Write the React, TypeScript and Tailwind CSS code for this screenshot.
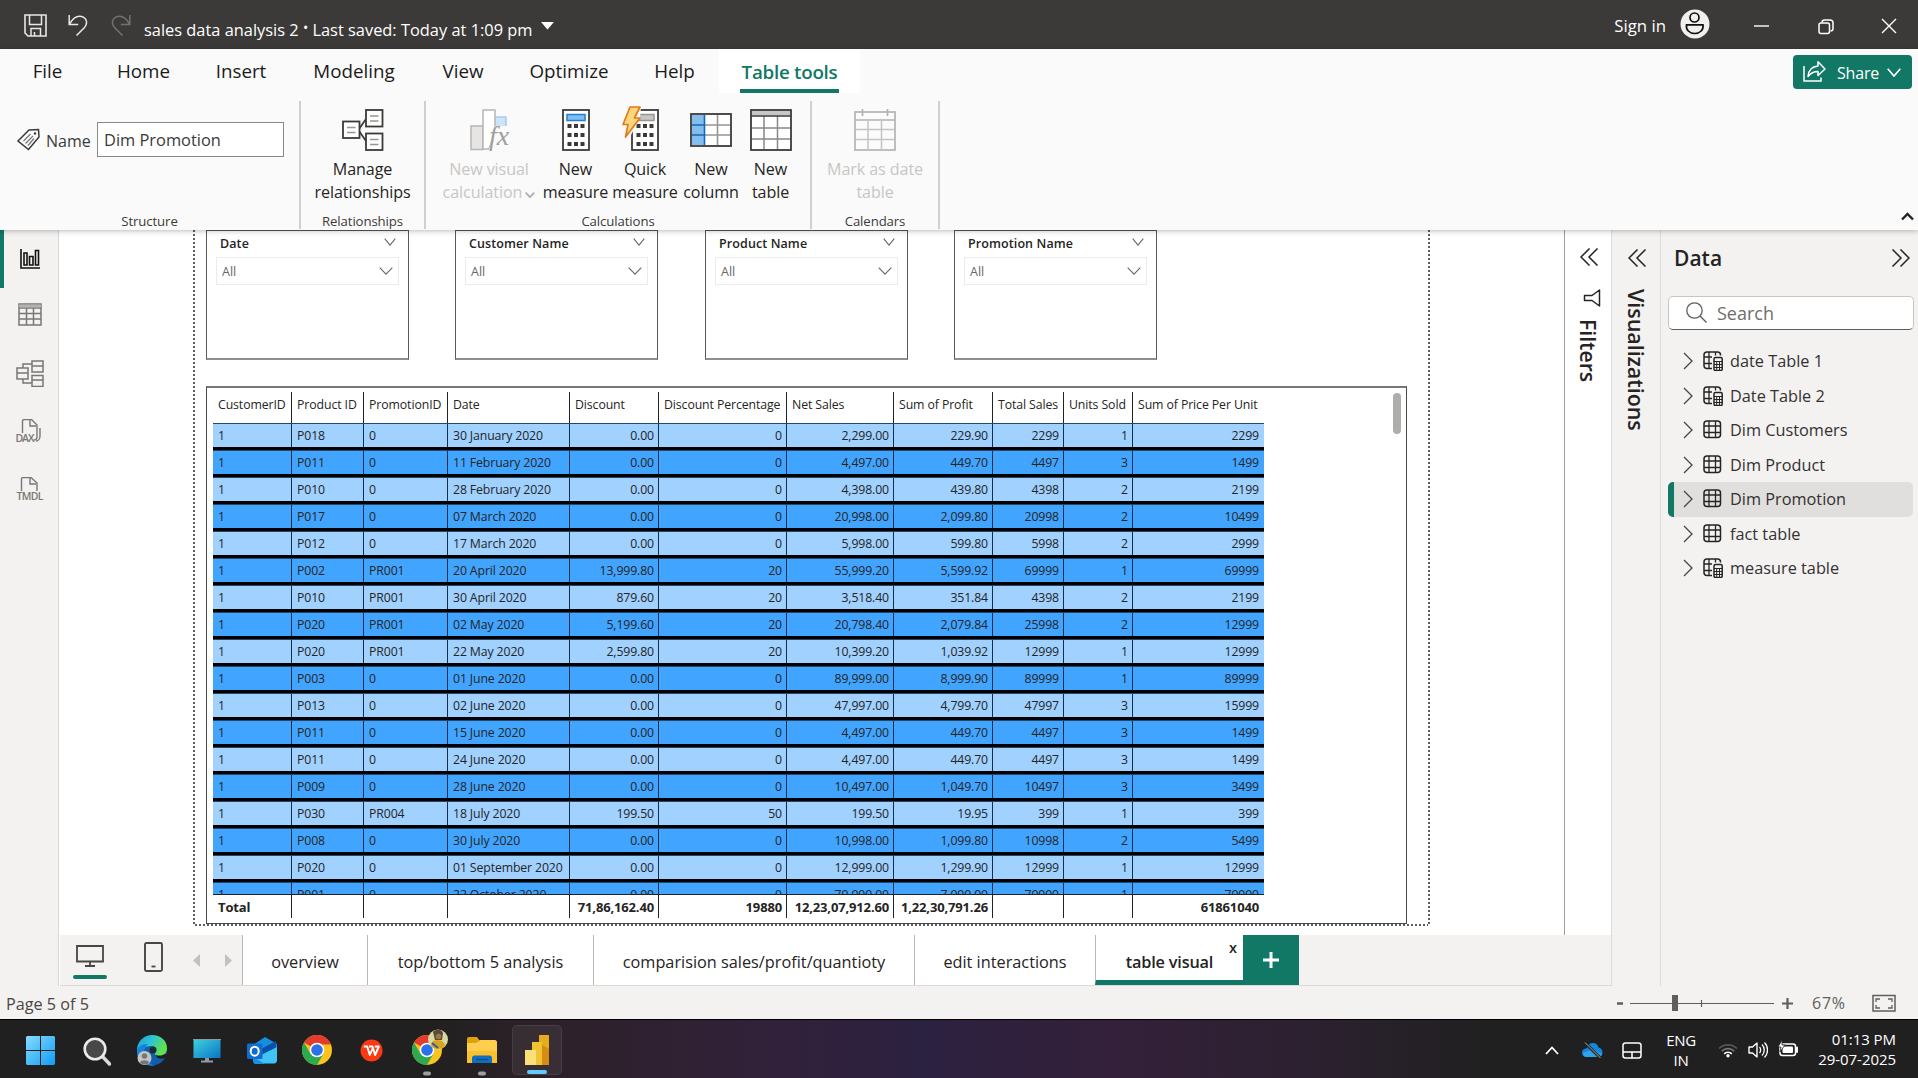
import React from "react";

type Svg = { children: React.ReactNode; w: number; h: number; vb?: string; className?: string };
const Ic = ({ children, w, h, vb, className }: Svg) => (
  <svg width={w} height={h} viewBox={vb ?? `0 0 ${w} ${h}`} fill="none" className={`shrink-0 ${className ?? ""}`}>
    {children}
  </svg>
);

const Chevron = ({ w, h, color, sw = 1.3, className }: { w: number; h: number; color: string; sw?: number; className?: string }) => (
  <Ic w={w} h={h} className={className}>
    <path d={`M.7 .7L${w / 2} ${h - 0.9}L${w - 0.7} .7`} stroke={color} strokeWidth={sw} />
  </Ic>
);

/* ---------- Title bar ---------- */
const TitleBar = () => (
  <header className="flex h-[49px] shrink-0 items-start bg-[#3b3a38] text-white">
    <Ic w={23} h={23} className="mt-[14px] ml-6">
      <path d="M1 1h21v21H4l-3-3z" stroke="#e8e8e8" strokeWidth="1.6" />
      <path d="M5.5 1v9.5h12V1M7 22v-7.5h9.500V22M10.500 18v4" stroke="#e8e8e8" strokeWidth="1.5" />
    </Ic>
    <Ic w={20} h={22} className="mt-[14px] ml-[21px]">
      <path d="M1.200 1v9.500h9M1.500 10C5 4 9.500 1.500 13.500 2.500C19 4 20 9.500 16.500 13.500L8.500 21.500" stroke="#e8e8e8" strokeWidth="1.5" />
    </Ic>
    <Ic w={20} h={22} className="mt-[14px] ml-[23px]">
      <path d="M18.800 1v9.500h-9M18.500 10C15 4 10.500 1.500 6.500 2.500C1 4 0 9.500 3.500 13.500L11.500 21.500" stroke="#73716f" strokeWidth="1.5" />
    </Ic>
    <div className="mt-[18px] ml-[13px] w-[390px] text-[16.4px] leading-6 whitespace-nowrap">
      sales data analysis 2 <span className="relative -top-[3px] text-[14px]">•</span> Last saved: Today at 1:09 pm
    </div>
    <Ic w={13} h={8} className="mt-[22px] ml-[7px]">
      <path d="M0 0h13L6.500 7.500z" fill="#fff" />
    </Ic>
    <div className="flex-1" />
    <div className="mt-[14px] text-[16.800px] leading-6">Sign in</div>
    <Ic w={30} h={30} className="mt-[9px] ml-[14px]">
      <circle cx="15" cy="15" r="14.500" fill="#f1f0ef" />
      <circle cx="14.500" cy="8.500" r="4.500" stroke="#111" strokeWidth="1.700" />
      <path d="M6.500 15.800h16.500c.8 5-3 8.700-8.300 8.700s-9-3.700-8.200-8.700z" stroke="#111" strokeWidth="1.700" />
    </Ic>
    <Ic w={15} h={2} className="mt-[25px] ml-[44px]">
      <path d="M0 1h15" stroke="#fff" strokeWidth="1.400" />
    </Ic>
    <Ic w={16} h={16} className="mt-[19px] ml-[49px]">
      <rect x="1" y="4" width="10.500" height="10.500" rx="2" stroke="#fff" strokeWidth="1.500" />
      <path d="M4 3.500C4 2 5 1 6.500 1H12c2 0 3 1 3 3v5.500c0 1.500-1 2.500-2.500 2.500" stroke="#fff" strokeWidth="1.500" />
    </Ic>
    <Ic w={16} h={16} className="mt-[18px] mr-[21px] ml-[47px]">
      <path d="M1 1l14 14M15 1L1 15" stroke="#fff" strokeWidth="1.400" />
    </Ic>
  </header>
);

/* ---------- Ribbon ---------- */
const tabs: [string, string][] = [
  ["File", "w-[95px]"],
  ["Home", "w-[97px]"],
  ["Insert", "w-[98px]"],
  ["Modeling", "w-[128px]"],
  ["View", "w-[90px]"],
  ["Optimize", "w-[122px]"],
  ["Help", "w-[89px]"],
];

const TabRow = () => (
  <nav className="flex h-[52px] text-[18.800px] text-[#1b1a19]">
    {tabs.map(([t, w]) => (
      <div key={t} className={`${w} flex h-[44px] shrink-0 items-center justify-center pt-px`}>
        {t}
      </div>
    ))}
    <div className="flex h-[44px] w-[141px] flex-col items-center justify-end bg-white font-semibold text-[#117865]">
      <span className="mb-[3px] tracking-[-0.27px]">Table tools</span>
      <span className="h-1 w-[99px] bg-[#117865]" />
    </div>
    <div className="flex-1" />
    <button className="mt-[6px] mr-[6px] flex h-[34px] w-[119px] items-center rounded-[4px] bg-[#117865] text-white">
      <Ic w={23} h={22} className="mb-[3px] ml-[10px]">
        <path d="M1 6v15h17v-3.500" stroke="#fff" strokeWidth="1.500" />
        <path d="M5 16.500C5.500 10 9 6.500 15 6V1.800l7 7.200-7 6.500v-4c-4 0-7 1-10 5z" stroke="#fff" strokeWidth="1.500" strokeLinejoin="round" />
      </Ic>
      <span className="ml-[11px] pt-px text-[16px] font-medium tracking-[-0.2px]">Share</span>
      <Chevron w={14} h={9} color="#fff" sw={1.6} className="ml-[8px]" />
    </button>
  </nav>
);

const dots = (x0: number) =>
  [15, 24, 33].flatMap((y) => [0, 6.5, 13].map((dx) => <rect key={`${y}-${dx}`} x={x0 + dx} y={y} width="4" height="4" fill="#3b3a39" />));

const RelIcon = () => (
  <Ic w={42} h={42}>
    <path d="M17 20l7-10M17 22l7 10" stroke="#3b3a39" strokeWidth="1.800" />
    {[
      [1, 12.5],
      [24, 1],
      [24, 24.5],
    ].map(([x, y]) => (
      <g key={`${x}-${y}`}>
        <rect x={x} y={y} width="16.500" height="16.500" fill="#fff" stroke="#3b3a39" strokeWidth="1.800" />
        <path d={`M${x + 4} ${y + 6}h8.500M${x + 4} ${y + 11}h8.500`} stroke="#979593" strokeWidth="1.500" />
      </g>
    ))}
  </Ic>
);
const VisualCalcIcon = () => (
  <Ic w={42} h={42} className="ml-[4px]">
    <rect x="24" y="8" width="12" height="14" fill="#cde4f7" stroke="#a6cdee" strokeWidth="1.500" />
    <rect x="1" y="17" width="12" height="23.500" fill="#e6e5e4" stroke="#b8b6b4" strokeWidth="1.500" />
    <path d="M13 40V1h12v22l-6 17z" fill="#fff" stroke="#b8b6b4" strokeWidth="1.500" />
    <path d="M25 17h15v24H19z" fill="#fafafa" />
    <text x="19" y="36" fontFamily="Liberation Serif" fontStyle="italic" fontSize="28" fill="#a19f9d">fx</text>
  </Ic>
);
const MeasureIcon = () => (
  <Ic w={28} h={42}>
    <rect x="1" y="1" width="26" height="40" fill="#fff" stroke="#3b3a39" strokeWidth="1.800" />
    <rect x="5" y="5.500" width="18" height="6" fill="#83beec" stroke="#1e7fd0" strokeWidth="1.500" />
    {dots(5.500)}
  </Ic>
);
const QuickIcon = () => (
  <Ic w={37} h={45} className="-mt-[3px] mr-[9px]">
    <rect x="10" y="4" width="26" height="40" fill="#fff" stroke="#3b3a39" strokeWidth="1.800" />
    <rect x="14" y="8.500" width="18" height="6" fill="#c8c6c4" stroke="#979593" strokeWidth="1.500" />
    <g transform="translate(0 3)">{dots(14.5)}</g>
    <path d="M-1 34V0h20l-1 12-9 17v5z" fill="#fafafa" />
    <path d="M8 1h10l-5.500 11H18L3.500 31 6 18.500H1z" fill="#ffd57e" stroke="#e07c16" strokeWidth="1.700" strokeLinejoin="round" />
  </Ic>
);
const ColumnIcon = () => (
  <Ic w={42} h={42}>
    <rect x="1" y="5" width="40" height="32" fill="#fff" stroke="#3b3a39" strokeWidth="1.800" />
    <rect x="2" y="6" width="13" height="30" fill="#83beec" />
    <path d="M14 16h26M14 26h26M27.500 6v30" stroke="#979593" strokeWidth="1.600" />
    <path d="M2 16h13M2 26h13M14.500 6v30" stroke="#1169b8" strokeWidth="1.600" />
  </Ic>
);
const TableIcon = () => (
  <Ic w={42} h={42}>
    <rect x="1" y="1" width="40" height="40" fill="#fff" stroke="#3b3a39" strokeWidth="1.800" />
    <rect x="2" y="2" width="38" height="4.500" fill="#c8c6c4" />
    <path d="M2 19h38M2 30h38M14 7v33M27.500 7v33" stroke="#8a8886" strokeWidth="1.500" />
    <path d="M1 7h40" stroke="#3b3a39" strokeWidth="1.500" />
  </Ic>
);
const CalendarIcon = () => (
  <Ic w={42} h={42}>
    <rect x="1" y="3" width="40" height="38" fill="#fbfbfb" stroke="#b5b3b1" strokeWidth="1.700" />
    <path d="M1 11h40M8.500 0v7M33.500 0v7" stroke="#b5b3b1" strokeWidth="1.700" />
    <path d="M2 20.500h38M2 30.500h38M14 11v30M27.500 11v30" stroke="#c6c4c2" strokeWidth="1.500" />
  </Ic>
);

const Btn = ({ icon, a, b, w, off }: { icon: React.ReactNode; a: string; b: React.ReactNode; w: string; off?: boolean }) => (
  <div className={`${w} flex shrink-0 flex-col items-center pt-[8px] text-[16.100px] leading-[23px] tracking-[-0.08px] whitespace-nowrap ${off ? "text-[#c8c6c4]" : "text-[#252423]"}`}>
    <div className="flex h-[42px]">{icon}</div>
    <div className="mt-[7px]">{a}</div>
    <div>{b}</div>
  </div>
);

const Group = ({ w, label, children }: { w: string; label: string; children: React.ReactNode }) => (
  <section className={`${w} flex h-[128px] shrink-0 flex-col border-r-2 border-[#d2d0ce]`}>
    <div className="flex flex-1">{children}</div>
    <div className="h-[17px] text-center text-[13.200px] leading-[18px] tracking-[-0.100px] text-[#3b3a39]">{label}</div>
  </section>
);

const Ribbon = () => (
  <div className="relative z-10 h-[181px] shrink-0 bg-[#fafafa] shadow-[0_1px_5px_rgba(0,0,0,0.28)]">
    <TabRow />
    <div className="flex h-[129px]">
      <Group w="w-[301px]" label="Structure">
        <div className="mt-[21px] flex h-[35px] w-full items-center pl-[17px] text-[16px] text-[#3b3a39]">
          <Ic w={23} h={23}>
            <path d="M1 13L12 2l9.500-.5L22 9 11.500 21.500z" stroke="#3b3a39" strokeWidth="1.500" />
            <circle cx="18" cy="5.500" r="1.200" fill="#3b3a39" />
            <path d="M6.500 13l7-7M8.500 15.500l7.500-7.500M11 17.500l6-7" stroke="#797775" strokeWidth="1.200" />
          </Ic>
          <span className="mt-[3px] ml-[6px] w-[51px]">Name</span>
          <span className="flex h-[35px] w-[187px] items-center border border-[#8a8886] bg-white pt-[2px] pl-[6px] text-[16.400px]">Dim Promotion</span>
        </div>
      </Group>
      <Group w="w-[125px]" label="Relationships">
        <Btn w="w-[123px]" icon={<RelIcon />} a="Manage" b="relationships" />
      </Group>
      <Group w="w-[386px]" label="Calculations">
        <Btn
          w="w-[118px] pl-[8px]"
          icon={<VisualCalcIcon />}
          a="New visual"
          b={
            <span className="flex items-center">
              calculation
              <Chevron w={10} h={6} color="#b0aeac" sw={1.8} className="mt-[4px] ml-[3px]" />
            </span>
          }
          off
        />
        <Btn w="w-[63px]" icon={<MeasureIcon />} a="New" b="measure" />
        <Btn w="w-[76px]" icon={<QuickIcon />} a="Quick" b="measure" />
        <Btn w="w-[56px]" icon={<ColumnIcon />} a="New" b="column" />
        <Btn w="w-[63px]" icon={<TableIcon />} a="New" b="table" />
      </Group>
      <Group w="w-[128px]" label="Calendars">
        <Btn w="w-[126px]" icon={<CalendarIcon />} a="Mark as date" b="table" off />
      </Group>
      <div className="flex flex-1 items-end justify-end pr-[4px] pb-[9px]">
        <Ic w={13} h={9}>
          <path d="M1 7.500L6.500 2l5.500 5.500" stroke="#252423" strokeWidth="2.400" />
        </Ic>
      </div>
    </div>
  </div>
);

/* ---------- Left rail ---------- */
const Rail = () => (
  <aside className="flex w-[59px] shrink-0 flex-col border-r border-[#d8d6d4] bg-[#f3f2f1]">
    <div className="flex h-[58px] items-center border-l-4 border-[#117865] pl-4">
      <Ic w={20} h={20}>
        <path d="M1 0v19h19" stroke="#111" strokeWidth="1.600" />
        <path d="M4 4h3v12H4zM9.500 7.500h3.500V16H9.500zM15.500 1.500h3V16h-3z" stroke="#111" strokeWidth="1.600" />
      </Ic>
    </div>
    <div className="flex h-[54px] items-end pb-[16px] pl-[18px]">
      <Ic w={24} h={23}>
        <path d="M1 1h22v21H1zM1 5h22M1 10.500h22M1 16h22M8.500 5v17M15.500 5v17" stroke="#797775" strokeWidth="1.500" />
        <path d="M1 3h22" stroke="#b5b3b1" strokeWidth="2.500" />
      </Ic>
    </div>
    <div className="mt-[18px] pl-[16px]">
      <Ic w={28} h={27}>
        <path d="M1 8h11v11H1zM1 13h11M16 1h11v11H16zM16 6h11M16 15.500h11v11H16zM16 20h11M7 8V4h9M7 19v4h9" stroke="#797775" strokeWidth="1.500" />
      </Ic>
    </div>
    <div className="mt-[32px] h-[27px] pl-[16px]">
      <Ic w={28} h={25}>
        <path d="M6.500 14V2c0-1 .5-1.500 1.500-1.500h7.500L21 6v12c0 2-1.500 3-3.500 3M14 1v6h6M24 9v8c0 3-2 5-4 5" stroke="#797775" strokeWidth="1.400" />
        <text x="-0.500" y="23" fontSize="10.500" fontWeight="600" fontFamily="Open Sans" fill="#797775" textLength="19">DAX</text>
      </Ic>
    </div>
    <div className="mt-[31px] pl-[16px]">
      <Ic w={28} h={25}>
        <path d="M5.500 14V2c0-1 .5-1.500 1.500-1.500h8L21 6v8M14 1v6h6" stroke="#797775" strokeWidth="1.400" />
        <text x="0.500" y="23" fontSize="10.500" fontWeight="600" fontFamily="Open Sans" fill="#797775" textLength="27">TMDL</text>
      </Ic>
    </div>
  </aside>
);

/* ---------- Canvas ---------- */
const Slicer = ({ title, cls }: { title: string; cls?: string }) => (
  <div className={`h-[130px] w-[203px] shrink-0 border border-[#5a5a5a] border-b-2 border-b-[#8f8f8f] bg-white ${cls ?? ""}`}>
    <div className="flex h-[26px] justify-between pr-[12px] pl-[13px] leading-[26px] font-semibold text-[#252423]">
      <span className="text-[12.500px] tracking-[0.1px]">{title}</span>
      <Chevron w={12} h={8} color="#666" className="mt-[7px]" sw={1.1} />
    </div>
    <div className="ml-[9px] flex h-[28px] w-[183px] items-center justify-between border border-[#ebebeb] pr-[5px] pl-[5px] text-[12.500px] text-[#666]">
      <span className="pt-[3px]">All</span>
      <Chevron w={14} h={8} color="#666" sw={1.1} />
    </div>
  </div>
);

const cols: [string, string][] = [
  ["CustomerID", "w-[79px]"],
  ["Product ID", "w-[72px]"],
  ["PromotionID", "w-[84px]"],
  ["Date", "w-[122px]"],
  ["Discount", "w-[89px]"],
  ["Discount Percentage", "w-[128px]"],
  ["Net Sales", "w-[107px]"],
  ["Sum of Profit", "w-[99px]"],
  ["Total Sales", "w-[71px]"],
  ["Units Sold", "w-[69px]"],
  ["Sum of Price Per Unit", "w-[131px]"],
];
const data = `P018|0|30 January 2020|0.00|0|2,299.00|229.90|2299|1|2299
P011|0|11 February 2020|0.00|0|4,497.00|449.70|4497|3|1499
P010|0|28 February 2020|0.00|0|4,398.00|439.80|4398|2|2199
P017|0|07 March 2020|0.00|0|20,998.00|2,099.80|20998|2|10499
P012|0|17 March 2020|0.00|0|5,998.00|599.80|5998|2|2999
P002|PR001|20 April 2020|13,999.80|20|55,999.20|5,599.92|69999|1|69999
P010|PR001|30 April 2020|879.60|20|3,518.40|351.84|4398|2|2199
P020|PR001|02 May 2020|5,199.60|20|20,798.40|2,079.84|25998|2|12999
P020|PR001|22 May 2020|2,599.80|20|10,399.20|1,039.92|12999|1|12999
P003|0|01 June 2020|0.00|0|89,999.00|8,999.90|89999|1|89999
P013|0|02 June 2020|0.00|0|47,997.00|4,799.70|47997|3|15999
P011|0|15 June 2020|0.00|0|4,497.00|449.70|4497|3|1499
P011|0|24 June 2020|0.00|0|4,497.00|449.70|4497|3|1499
P009|0|28 June 2020|0.00|0|10,497.00|1,049.70|10497|3|3499
P030|PR004|18 July 2020|199.50|50|199.50|19.95|399|1|399
P008|0|30 July 2020|0.00|0|10,998.00|1,099.80|10998|2|5499
P020|0|01 September 2020|0.00|0|12,999.00|1,299.90|12999|1|12999
P001|0|22 October 2020|0.00|0|79,999.00|7,999.90|79999|1|79999`
  .split("\n")
  .map((r) => ["1", ...r.split("|")]);
const totals = ["Total", "", "", "", "71,86,162.40", "19880", "12,23,07,912.60", "1,22,30,791.26", "", "", "61861040"];

const align = (i: number) => (i === 10 ? "justify-end pr-[5px]" : i > 3 ? "justify-end border-r pr-[4px]" : "border-r pl-[5px]");

const DataTable = () => (
  <div className="mt-[26px] ml-[11px] flex h-[538px] w-[1201px] justify-between border border-[#4a4a4a] border-t-2 border-t-[#777] bg-white pl-[6px] text-[12.300px] text-[#252423]">
    <div className="w-[1051px] pt-[4px]">
      <div className="flex h-[31px]">
        {cols.map(([c, w], i) => (
          <div key={c} className={`${w} shrink-0 border-[#222] pl-[5px] leading-[26px] tracking-[-0.1px] whitespace-nowrap ${i < 10 ? "border-r" : ""}`}>
            {c}
          </div>
        ))}
      </div>
      <div className="h-[471px] overflow-hidden">
        {data.map((r, ri) => (
          <div key={ri} className={`flex h-[27px] border-t border-b-[3px] border-t-[#24476b] border-b-black ${ri % 2 ? "bg-[#41a4ff]" : "bg-[#a0d1ff]"}`}>
            {r.map((v, i) => (
              <div key={i} className={`${cols[i][1]} flex shrink-0 border-[#12304d] leading-[24px] tracking-[-0.130px] whitespace-nowrap ${align(i)}`}>
                {v}
              </div>
            ))}
          </div>
        ))}
      </div>
      <div className="flex h-[24px] border-t border-[#222] text-[13px] font-bold">
        {totals.map((v, i) => (
          <div key={i} className={`${cols[i][1]} flex shrink-0 border-[#222] leading-[24px] tracking-[-0.15px] whitespace-nowrap ${align(i)}`}>
            {v}
          </div>
        ))}
      </div>
    </div>
    <div className="mt-[5px] mr-[5px] h-[41px] w-[8px] rounded-full bg-[#b0aeac]" />
  </div>
);

const DOT_V = "bg-[repeating-linear-gradient(to_bottom,#605e5c_0_2px,transparent_2px_4px)]";
const DOT_H = "bg-[repeating-linear-gradient(to_right,#605e5c_0_2px,transparent_2px_4px)]";

const Canvas = () => (
  <div className="h-[705px] bg-white pl-[133px]">
    <div className="flex w-[1237px]">
      <div className={`h-[696px] w-[2px] ${DOT_V}`} />
      <div className="h-[694px] w-[1233px]">
        <div className="flex pl-[11px]">
          <Slicer title="Date" />
          <Slicer title="Customer Name" cls="ml-[46px]" />
          <Slicer title="Product Name" cls="ml-[47px]" />
          <Slicer title="Promotion Name" cls="ml-[46px]" />
        </div>
        <DataTable />
        <div className={`h-[2px] ${DOT_H}`} />
      </div>
      <div className={`h-[696px] w-[2px] ${DOT_V}`} />
    </div>
  </div>
);

const PageTabs = () => (
  <div className="flex h-[51px] border-b border-[#dddbd9] bg-[#f3f2f1] text-[16.300px] text-[#252423]">
    <div className="ml-[13px] flex w-[34px] flex-col items-center">
      <Ic w={28} h={22} className="mt-[10px] mr-px">
        <path d="M1 1h26v15.500H1z" stroke="#484644" strokeWidth="1.800" />
        <path d="M14 16v4.500M9 21h10" stroke="#484644" strokeWidth="1.800" />
      </Ic>
      <div className="mt-[8px] h-1 w-[34px] rounded-full bg-[#117865]" />
    </div>
    <Ic w={19} h={30} className="mt-[7px] ml-[37px]">
      <rect x="1" y="1" width="17" height="28" rx="1.500" stroke="#484644" strokeWidth="1.900" />
      <path d="M7.500 24.500h4" stroke="#484644" strokeWidth="1.800" />
    </Ic>
    <Ic w={7} h={13} className="mt-[19px] ml-[30px]">
      <path d="M7 0v13L0 6.500z" fill="#c3c1bf" />
    </Ic>
    <Ic w={7} h={13} className="mt-[19px] mr-[10px] ml-[25px]">
      <path d="M0 0v13l7-6.500z" fill="#c3c1bf" />
    </Ic>
    {(
      [
        ["overview", "w-[125px]"],
        ["top/bottom 5 analysis", "w-[226px]"],
        ["comparision sales/profit/quantioty", "w-[321px]"],
        ["edit interactions", "w-[181px]"],
      ] as const
    ).map(([t, w]) => (
      <div key={t} className={`${w} flex shrink-0 items-center justify-center border-l border-[#bbb9b7] bg-white pt-[5px] whitespace-nowrap`}>
        {t}
      </div>
    ))}
    <div className="relative flex w-[148px] shrink-0 items-center justify-center border-b-[5px] border-l border-[#117865] border-l-[#bbb9b7] bg-white pt-[9px] font-semibold">
      <span className="tracking-[-0.2px]">table visual</span>
      <span className="absolute top-[3px] right-[6px] text-[14.500px] leading-5">x</span>
    </div>
    <div className="flex h-[50px] w-[56px] items-center justify-center bg-[#117865]">
      <Ic w={16} h={16}>
        <path d="M8 0v16M0 8h16" stroke="#fff" strokeWidth="3" />
      </Ic>
    </div>
  </div>
);

/* ---------- Right panes ---------- */
const Dbl = ({ flip, className }: { flip?: boolean; className?: string }) => (
  <Ic w={19} h={18} className={`${flip ? "-scale-x-100" : ""} ${className ?? ""}`}>
    <path d="M9.500 .5L1 9l8.500 8.500M17.500 .5L9 9l8.500 8.500" stroke="#252423" strokeWidth="1.500" />
  </Ic>
);

const fields: [string, boolean][] = [
  ["date Table 1", true],
  ["Date Table 2", true],
  ["Dim Customers", false],
  ["Dim Product", false],
  ["Dim Promotion", false],
  ["fact table", false],
  ["measure table", true],
];

const FieldIcon = ({ calc }: { calc: boolean }) => (
  <Ic w={20} h={20} className="ml-[10px]">
    <rect x="1" y="1" width="16.500" height="16.500" rx="3" stroke="#252423" strokeWidth="1.500" />
    <path d="M6 1v16M12.500 1v16M1 6h16M1 12.500h16" stroke="#252423" strokeWidth="1.300" />
    {calc && (
      <g>
        <rect x="9" y="4.500" width="11" height="15.500" fill="#f3f2f1" />
        <rect x="11" y="6.500" width="8.200" height="13" rx="1.500" stroke="#252423" strokeWidth="1.500" fill="#f3f2f1" />
        <path d="M11 10.500h8M11 13.500h8M11 16.500h8M13.700 11v8M16.500 11v8" stroke="#252423" strokeWidth="1" />
      </g>
    )}
  </Ic>
);

const Panes = () => (
  <div className="flex h-[756px] w-[307px] shrink-0">
    <div className="flex w-[50px] shrink-0 flex-col items-center border-r border-l border-r-[#dddbd9] border-l-[#dddbd9] bg-[#f3f2f1]">
      <Dbl className="mt-[19px] ml-[3px]" />
      <div className="mt-[22px] h-[160px] text-[21.500px] leading-[26px] font-semibold tracking-[-0.05px] text-[#252423] [writing-mode:vertical-rl]">Visualizations</div>
    </div>
    <div className="flex flex-1 flex-col bg-[#f3f2f1]">
      <div className="flex justify-between pt-[13px] pr-[8px] pl-[13px]">
        <span className="text-[21px] leading-[30px] font-semibold text-[#252423]">Data</span>
        <Dbl flip className="mt-[6px]" />
      </div>
      <div className="mt-[23px] ml-[7px] flex h-[34px] w-[246px] items-center rounded-[5px] border border-[#c8c6c4] border-b-[#605e5c] bg-white pl-[17px] text-[18px] text-[#706e6c]">
        <Ic w={21} h={21} className="mr-[10px] mb-[2px]">
          <circle cx="8.500" cy="8.500" r="7.700" stroke="#605e5c" strokeWidth="1.300" />
          <path d="M14 14l6.500 6.500" stroke="#605e5c" strokeWidth="1.400" />
        </Ic>
        Search
      </div>
      <div className="mt-[14px] ml-[7px] w-[245px]">
        {fields.map(([f, calc], i) => (
          <div key={f} className={`flex h-[34.500px] items-center rounded-[5px] text-[16.300px] text-[#33312f] ${i === 4 ? "border-l-[6px] border-[#117865] bg-[#e1dfdd] pl-[9px]" : "pl-[15px]"}`}>
            <Ic w={10} h={18}>
              <path d="M1 1l8 8-8 8" stroke="#484644" strokeWidth="1.300" />
            </Ic>
            <FieldIcon calc={calc} />
            <span className="ml-[7px]">{f}</span>
          </div>
        ))}
      </div>
    </div>
  </div>
);

const FiltersPane = () => (
  <div className="flex h-[705px] w-[47px] shrink-0 flex-col items-center border-l border-[#a19f9d] bg-white">
    <Dbl className="mt-[18px] ml-[2px]" />
    <Ic w={18} h={18} className="mt-[23px] ml-[7px]">
      <path d="M16.500 1v16L9 11.500H1.500v-5H9z" stroke="#252423" strokeWidth="1.500" strokeLinejoin="round" />
    </Ic>
    <div className="mt-[12px] text-[21.200px] leading-[26px] font-semibold text-[#252423] [writing-mode:vertical-rl]">Filters</div>
  </div>
);

/* ---------- Status bar ---------- */
const StatusBar = () => (
  <footer className="flex h-[33px] shrink-0 items-center bg-[#f3f2f1] text-[16.200px] text-[#484644]">
    <span className="ml-[6px] pt-[4px]">Page 5 of 5</span>
    <div className="flex-1" />
    <Ic w={279} h={20} className="mr-[22px]">
      <path d="M0 10.500h6" stroke="#605e5c" strokeWidth="2.500" />
      <path d="M13 10.500h144" stroke="#605e5c" strokeWidth="1.200" />
      <rect x="55" y="2" width="6" height="16" fill="#605e5c" />
      <path d="M84.500 7v7" stroke="#605e5c" strokeWidth="1.200" />
      <path d="M165 10.500h11M170.500 5v11" stroke="#605e5c" strokeWidth="2.200" />
      <text x="195" y="16" fontFamily="Open Sans" fontSize="16" fill="#605e5c" textLength="33">67%</text>
      <rect x="256" y="2.500" width="22" height="15.500" stroke="#605e5c" strokeWidth="1.500" />
      <path d="M259 9V6h4M271 6h4v3M259 12v3h4M271 15h4v-3" stroke="#605e5c" strokeWidth="1.300" />
    </Ic>
  </footer>
);

/* ---------- Taskbar ---------- */
const Chrome = () => (
  <>
    <circle cx="15" cy="15" r="15" fill="#fcc31e" />
    <path d="M15 15L2 7.500A15 15 0 0 1 28 7.500L29 9.500H15z" fill="#e33b2e" />
    <path d="M2 7.500A15 15 0 0 0 15 30L21.500 18.700 8.500 18.700z" fill="#2da94f" />
    <circle cx="15" cy="15" r="7.300" fill="#fff" />
    <circle cx="15" cy="15" r="5.800" fill="#2b72ea" />
  </>
);

const Taskbar = () => (
  <div className="flex h-[59px] shrink-0 items-start border-t border-black bg-[linear-gradient(90deg,#202020_0%,#202020_22%,#2c2128_28%,#32213a_40%,#2b2140_48%,#34203a_58%,#2c2130_68%,#202020_78%)] text-[15px] text-white">
    <Ic w={29} h={29} className="mt-[16px] ml-[26px]">
      <defs>
        <linearGradient id="win" x1="0" y1="0" x2="29" y2="29" gradientUnits="userSpaceOnUse">
          <stop offset="0" stopColor="#86dcff" />
          <stop offset="1" stopColor="#119cf5" />
        </linearGradient>
      </defs>
      <path d="M1 0h13v14H0V1zM15 0h13l1 1v13H15zM0 15h14v14H1l-1-1zM15 15h14v13l-1 1H15z" fill="url(#win)" />
    </Ic>
    <Ic w={28} h={29} className="mt-[17px] ml-[28px]">
      <path d="M19 19l7.500 8" stroke="#d8d8dc" strokeWidth="3.500" strokeLinecap="round" />
      <circle cx="12" cy="12" r="10.300" fill="#484848" stroke="#ebebee" strokeWidth="2.600" />
    </Ic>
    <Ic w={31} h={31} className="mt-[15px] ml-[26px]">
      <defs>
        <linearGradient id="edge" x1="0" y1="0" x2="1" y2=".4">
          <stop offset="0" stopColor="#1a9fe0" />
          <stop offset=".5" stopColor="#2cc3d5" />
          <stop offset="1" stopColor="#62e348" />
        </linearGradient>
      </defs>
      <circle cx="15" cy="15.500" r="15" fill="#0f5fae" />
      <path d="M19 19h11.500v3c-3 2-9 3-11.500-1z" fill="#202020" />
      <path d="M0 14C1 5 8 0 15 0c9 0 15 6 15 13 0 5-3 7.500-7.500 7.500-4 0-6-1.500-4-3.500 2-3 0-6-4.500-6C9 11 3 14 0 18z" fill="url(#edge)" />
      <path d="M0 15c2-5 7-6.500 11-5.500-4 3-5 8-2 13 3 5 6 8 9 8C8 32-1 25 0 15z" fill="#1583d8" />
      <circle cx="16" cy="15" r="3.500" fill="#202a33" />
      <circle cx="7.500" cy="23" r="7" fill="#c6c4c2" />
      <circle cx="7.500" cy="21" r="2.800" fill="#777" />
      <path d="M3 27.500c.5-3 8.500-3 9 0-2 2.800-7 2.800-9 0z" fill="#777" />
    </Ic>
    <Ic w={28} h={26} className="mt-[17px] ml-[25px]">
      <defs>
        <linearGradient id="mon" x1="0" y1="0" x2="1" y2="1">
          <stop offset="0" stopColor="#3fd3df" />
          <stop offset="1" stopColor="#0b74c4" />
        </linearGradient>
      </defs>
      <rect x=".5" y="2" width="27" height="19" fill="url(#mon)" />
      <path d="M0 2.500h28" stroke="#8d99a3" strokeWidth="1" />
      <path d="M12 21h4v2.500h4v2H8v-2h4z" fill="#8d99a3" />
    </Ic>
    <Ic w={31} h={28} className="mt-[17px] ml-[26px]">
      <path d="M6 8L18 0l12 7v8L8 26 6 20z" fill="#1590e0" />
      <path d="M14 12L29 4v8L14 22z" fill="#0a4fa8" />
      <path d="M30 10v13c0 2-1 3.500-3 3.500H8L6 22z" fill="#3fc4f5" />
      <path d="M6 20l12 7H9c-2 0-3-1-3-3z" fill="#1a8fe0" />
      <rect x="0" y="6.500" width="15.500" height="15.500" rx="1.500" fill="#0f6cd0" />
      <ellipse cx="7.700" cy="14.200" rx="4" ry="4.500" stroke="#fff" strokeWidth="2" />
    </Ic>
    <Ic w={30} h={30} className="mt-[15px] ml-[24px]">
      <Chrome />
    </Ic>
    <Ic w={23} h={23} className="mt-[19px] ml-[28px]">
      <circle cx="11.500" cy="11.500" r="11" fill="#fb3a14" />
      <path d="M3.800 7.500h3.400l2.600 8.500 3-7M9 7.500h3.500l2.600 8.500 3.700-8.500h-4" stroke="#fff" strokeWidth="1.900" strokeLinejoin="round" />
    </Ic>
    <Ic w={37} h={47} className="mt-[9px] ml-[29px]">
      <g transform="translate(0 6)">
        <Chrome />
      </g>
      <circle cx="26" cy="10.500" r="10" fill="#d7d9a0" />
      <path d="M19 17c0-5 3-6 7-6s7 3 7 6c-3 4-11 4-14 0z" fill="#d9a520" />
      <path d="M21 3c2-3 9-3 10 1l-1 7h-7z" fill="#5b4a33" />
      <circle cx="26.500" cy="7.500" r="2.800" fill="#9a7550" />
      <path d="M20 14l6 5" stroke="#3558a8" strokeWidth="2" />
      <rect x="11" y="42.500" width="8" height="4" rx="2" fill="#a09ea0" />
    </Ic>
    <Ic w={30} h={40} className="mt-[16px] ml-[18px]">
      <path d="M0 3c0-1 .5-2 2-2h8l3 4h-2v5H0z" fill="#e0a010" />
      <path d="M0 7h9l4-3h15c1 0 2 1 2 2v21H0z" fill="#ffce4f" />
      <path d="M0 15h30v12H0z" fill="#fbc02d" />
      <path d="M5 27v-5c0-1.500 1-2.500 2.500-2.500h15c1.500 0 2.500 1 2.500 2.500v5z" fill="#0f6fc0" />
      <path d="M9 23.500h12" stroke="#0a4a88" strokeWidth="1.200" />
      <rect x="11" y="35.500" width="8" height="4" rx="2" fill="#a09ea0" />
    </Ic>
    <div className="mt-[5px] ml-[15px] flex h-[50px] w-[50px] flex-col items-center rounded-[5px] border border-white/8 bg-white/6">
      <Ic w={24} h={30} className="mt-[9px]">
        <path d="M14 0h10v30H14z" fill="#d48c12" />
        <path d="M14 0h10v14l-10-6z" fill="#e8ad1c" />
        <path d="M7 7h10v23H7z" fill="#f0c333" />
        <path d="M0 15h11v15H0z" fill="#fbe077" />
      </Ic>
      <div className="mt-[5px] h-1 w-5 rounded-full bg-[#60cbff]" />
    </div>
    <div className="flex-1" />
    <Ic w={14} h={9} className="mt-[26px]">
      <path d="M1 8l6-6.500L13 8" stroke="#fff" strokeWidth="1.800" />
    </Ic>
    <Ic w={21} h={17} className="mt-[22px] ml-[23px]">
      <path d="M4.500 15C1.500 15 0 13 0 10.500 0 8 2 6.500 4.500 6.500 5.500 3 8 1 11 1c3 0 5 2 5.500 4.500C19 5.800 20.500 8 20.500 10.500c0 2.500-1.500 4.500-4.500 4.500z" fill="#1287e0" />
      <path d="M1 11l10-4 9 5c-.5 2-2 3-4 3H4.500c-2 0-3.300-1.500-3.500-4z" fill="#2fa3ee" />
      <path d="M2.500 .5l16 15.500" stroke="#202020" strokeWidth="3" />
      <path d="M3 .5l15.500 15.500" stroke="#aaa" strokeWidth="1" />
    </Ic>
    <Ic w={20} h={17} className="mt-[22px] ml-[19px]">
      <rect x="1" y="1" width="18" height="15" rx="2.500" stroke="#fff" strokeWidth="1.500" />
      <path d="M1 10h18M10 10v6" stroke="#fff" strokeWidth="1.500" />
    </Ic>
    <div className="mt-[10px] ml-[23px] w-[32px] text-center leading-5 tracking-[-0.300px]">
      ENG
      <br />
      IN
    </div>
    <Ic w={20} h={16} className="mt-[22px] ml-[21px]">
      <path d="M1 6.500a13 13 0 0 1 18 0" stroke="#555" strokeWidth="1.600" />
      <path d="M3.700 9.200a9 9 0 0 1 12.600 0" stroke="#777" strokeWidth="1.600" />
      <path d="M6.200 11.800a5.400 5.400 0 0 1 7.600 0" stroke="#fff" strokeWidth="1.700" />
      <circle cx="10" cy="13.800" r="1.700" fill="#fff" />
    </Ic>
    <Ic w={20} h={18} className="mt-[21px] ml-[10px]">
      <path d="M1 6h3.500L9 2v14l-4.500-4H1z" stroke="#fff" strokeWidth="1.400" strokeLinejoin="round" />
      <path d="M11.500 6c1.500 1.500 1.500 4.500 0 6M14 3.500c3 3 3 8 0 11M16.500 1.500c4 4 4 11 0 15" stroke="#fff" strokeWidth="1.300" />
    </Ic>
    <Ic w={21} h={17} className="mt-[20px] ml-[10px]">
      <rect x="2" y="4" width="15.500" height="11.500" rx="2.500" stroke="#fff" strokeWidth="1.500" />
      <rect x="4.500" y="6.500" width="10.500" height="6.500" rx="1" fill="#fff" />
      <path d="M19 7.500v4.500" stroke="#fff" strokeWidth="2" strokeLinecap="round" />
      <path d="M4 0L0 7h3l-1 5 5-7H4z" fill="#fff" stroke="#202020" strokeWidth=".8" />
    </Ic>
    <div className="mt-[9px] mr-[22px] ml-[18px] w-[79px] text-right text-[15px] leading-5 tracking-[-0.050px] whitespace-nowrap">
      01:13 PM
      <br />
      29-07-2025
    </div>
  </div>
);

export default function App() {
  return (
    <div className="flex h-[1078px] w-[1918px] flex-col overflow-hidden bg-white font-['Open_Sans',sans-serif]">
      <TitleBar />
      <Ribbon />
      <main className="flex h-[756px] shrink-0">
        <Rail />
        <div className="flex w-[1552px] shrink-0 flex-col pl-px">
          <div className="flex">
            <div className="w-[1504px]">
              <Canvas />
            </div>
            <FiltersPane />
          </div>
          <PageTabs />
        </div>
        <Panes />
      </main>
      <StatusBar />
      <Taskbar />
    </div>
  );
}
